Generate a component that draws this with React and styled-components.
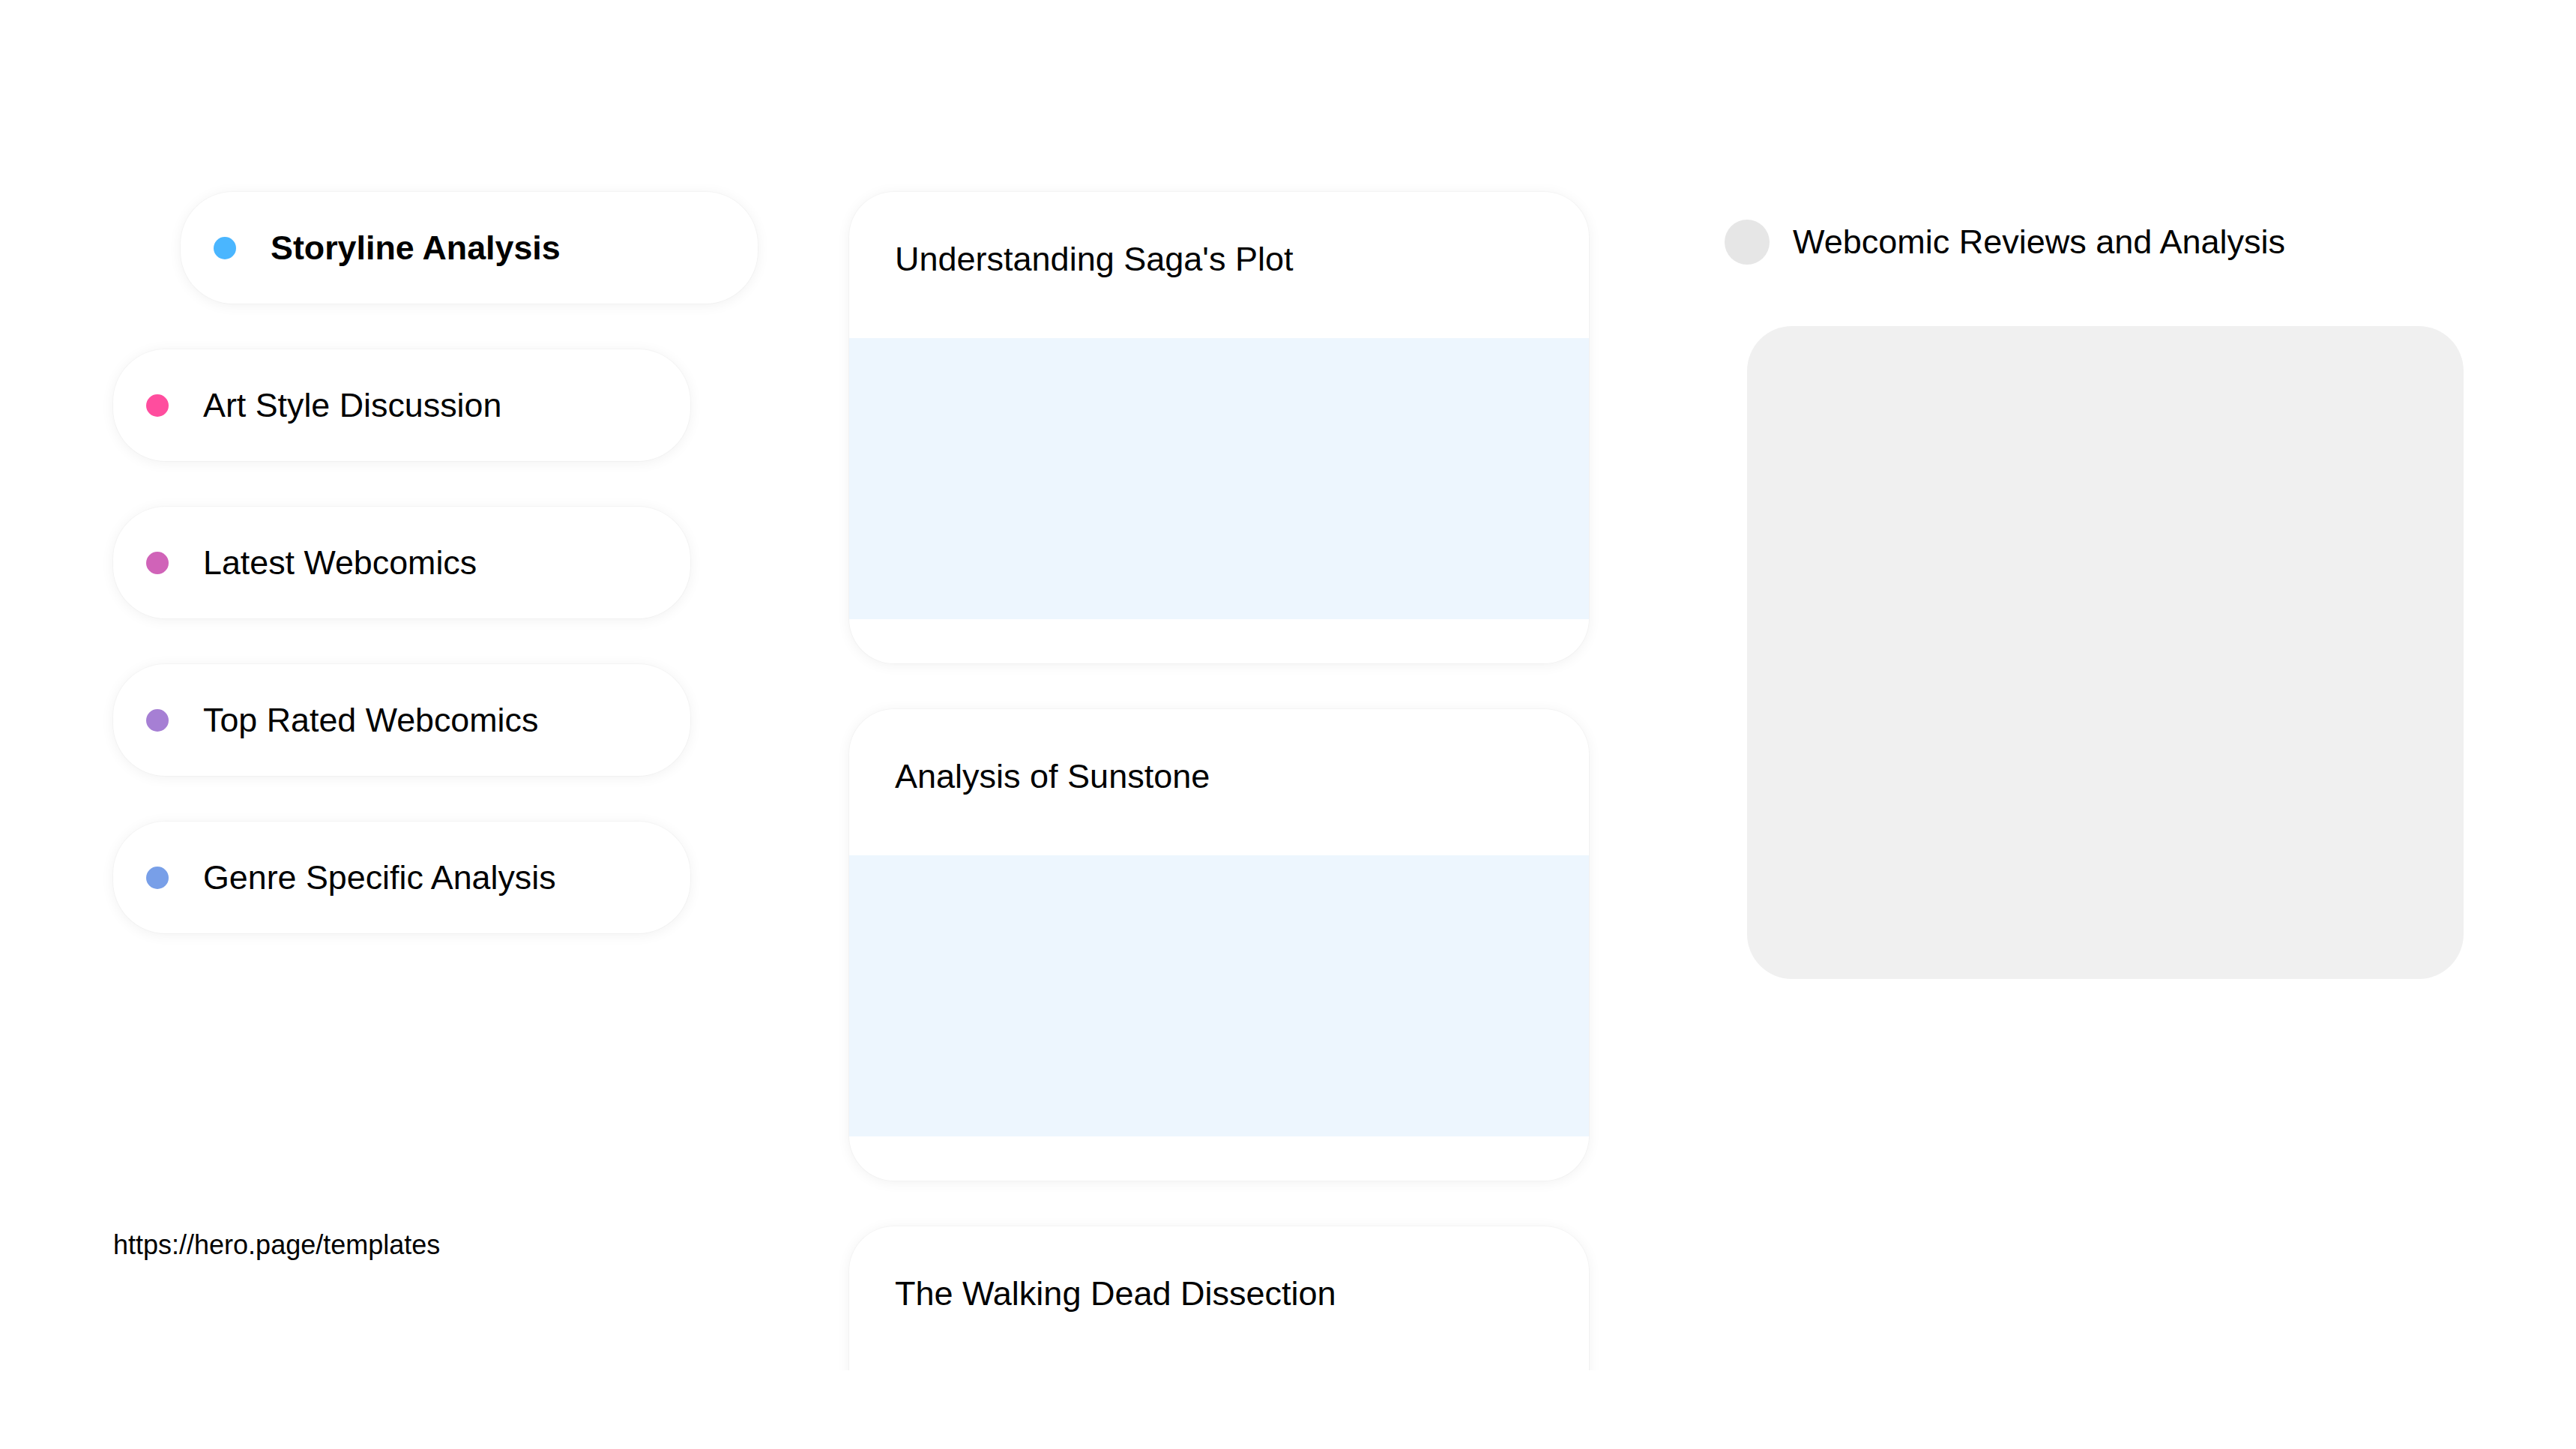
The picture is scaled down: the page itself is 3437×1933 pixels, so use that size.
import React from "react";
import styled, { createGlobalStyle } from "styled-components";

const GlobalStyle = createGlobalStyle`
  html, body {
    margin: 0;
    padding: 0;
    background: #ffffff;
  }
  body {
    font-family: "Liberation Sans", Arial, sans-serif;
    color: #000000;
  }
  * { box-sizing: border-box; }
`;

const Page = styled.div`
  width: 3437px;
  height: 1828px;
  overflow: hidden;
  display: flex;
  align-items: flex-start;
  padding-left: 151px;
`;

const LeftColumn = styled.nav`
  width: 770px;
  height: 100%;
  flex-shrink: 0;
  display: flex;
  flex-direction: column;
  padding-top: 256px;
`;

const TopicList = styled.ul`
  list-style: none;
  margin: 0;
  padding: 0;
  display: flex;
  flex-direction: column;
  gap: 61px;
`;

const TopicPill = styled.li`
  height: 149px;
  width: 770px;
  display: flex;
  align-items: center;
  gap: 46px;
  padding-left: 44px;
  background: #ffffff;
  border-radius: 70px;
  box-shadow: 0 2px 18px rgba(0, 0, 0, 0.06), 0 0 0 1px rgba(0, 0, 0, 0.025);
  transform: translateX(${(p) => (p.$active ? "90px" : "0")});
  font-size: 44.8px;
  font-weight: ${(p) => (p.$active ? 700 : 400)};
  line-height: normal;
  white-space: nowrap;
`;

const Dot = styled.span`
  width: 30px;
  height: 30px;
  border-radius: 50%;
  flex-shrink: 0;
  background: ${(p) => p.$color};
`;

const SourceLink = styled.div`
  margin-top: auto;
  margin-bottom: 146px;
  font-size: 36px;
  line-height: normal;
  color: #000000;
`;

const MiddleColumn = styled.main`
  width: 987px;
  flex-shrink: 0;
  margin-left: 212px;
  padding-top: 256px;
  display: flex;
  flex-direction: column;
  gap: 61px;
`;

const ArticleCard = styled.article`
  width: 987px;
  height: 629px;
  flex-shrink: 0;
  background: #ffffff;
  border-radius: 60px;
  overflow: hidden;
  box-shadow: 0 2px 18px rgba(0, 0, 0, 0.06), 0 0 0 1px rgba(0, 0, 0, 0.025);
  display: flex;
  flex-direction: column;
`;

const CardHeader = styled.header`
  height: 195px;
  padding: 64px 61px 0;
  flex-shrink: 0;
`;

const CardTitle = styled.h3`
  margin: 0;
  font-size: 45px;
  font-weight: 400;
  line-height: normal;
  white-space: nowrap;
`;

const CardMedia = styled.div`
  height: 375px;
  flex-shrink: 0;
  background: #edf6fe;
`;

const RightColumn = styled.aside`
  width: 986px;
  flex-shrink: 0;
  margin-left: 181px;
  padding-top: 293px;
  display: flex;
  flex-direction: column;
`;

const SectionHeader = styled.div`
  height: 60px;
  display: flex;
  align-items: center;
  gap: 31px;
`;

const Avatar = styled.span`
  width: 60px;
  height: 60px;
  border-radius: 50%;
  background: #e6e6e6;
  flex-shrink: 0;
`;

const SectionTitle = styled.h2`
  margin: 0;
  font-size: 45px;
  font-weight: 400;
  line-height: normal;
  white-space: nowrap;
`;

const PreviewPanel = styled.div`
  margin-top: 82px;
  margin-left: 30px;
  width: 956px;
  height: 871px;
  border-radius: 60px;
  background: #f0f0f0;
`;

const topics = [
  { label: "Storyline Analysis", color: "#4ab6ff", active: true },
  { label: "Art Style Discussion", color: "#ff4d9e" },
  { label: "Latest Webcomics", color: "#d063b8" },
  { label: "Top Rated Webcomics", color: "#a67fd4" },
  { label: "Genre Specific Analysis", color: "#789fe8" },
];

const articles = [
  "Understanding Saga's Plot",
  "Analysis of Sunstone",
  "The Walking Dead Dissection",
];

export default function App() {
  return (
    <>
      <GlobalStyle />
      <Page>
        <LeftColumn>
          <TopicList>
            {topics.map((t) => (
              <TopicPill key={t.label} $active={t.active}>
                <Dot $color={t.color} />
                {t.label}
              </TopicPill>
            ))}
          </TopicList>
          <SourceLink>https://hero.page/templates</SourceLink>
        </LeftColumn>
        <MiddleColumn>
          {articles.map((a) => (
            <ArticleCard key={a}>
              <CardHeader>
                <CardTitle>{a}</CardTitle>
              </CardHeader>
              <CardMedia />
            </ArticleCard>
          ))}
        </MiddleColumn>
        <RightColumn>
          <SectionHeader>
            <Avatar />
            <SectionTitle>Webcomic Reviews and Analysis</SectionTitle>
          </SectionHeader>
          <PreviewPanel />
        </RightColumn>
      </Page>
    </>
  );
}
